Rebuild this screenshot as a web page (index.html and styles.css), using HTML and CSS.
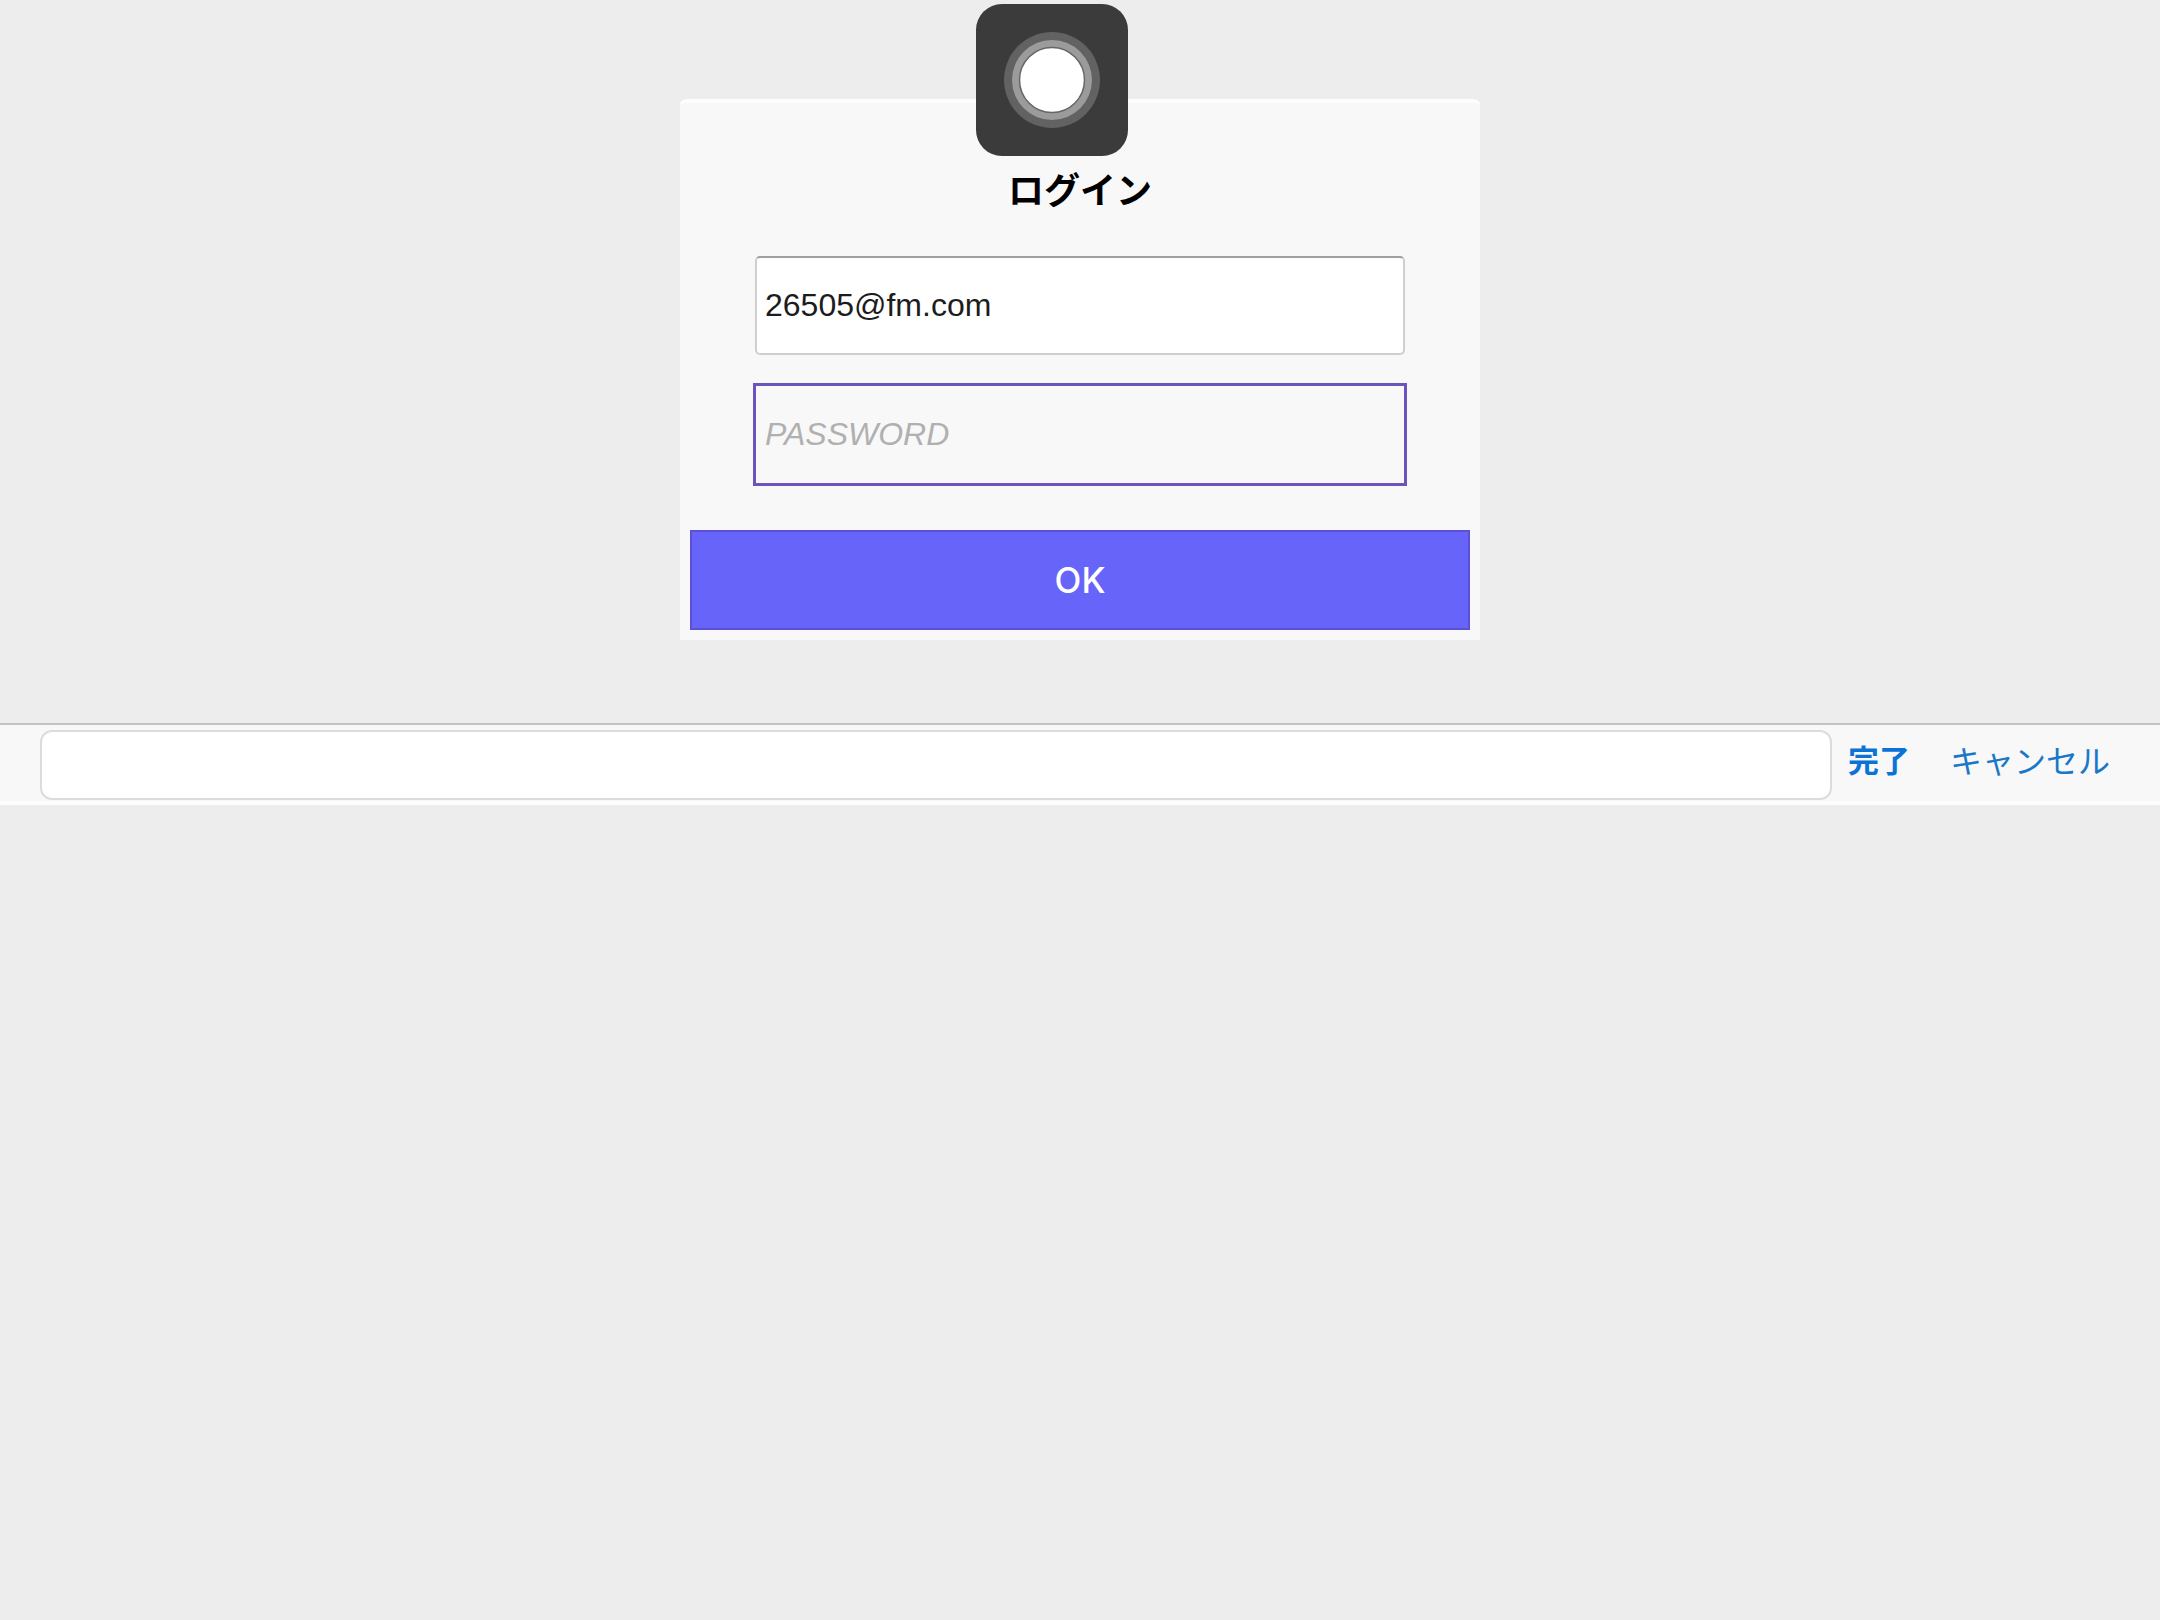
FILE: index.html
```html
<!DOCTYPE html>
<html lang="ja">
<head>
<meta charset="utf-8">
<title>ログイン</title>
<link rel="stylesheet" href="styles.css">
</head>
<body>
<main class="page">
  <form class="login">
    <h1 class="login-title">ログイン</h1>
    <div class="login-fields">
      <input class="field" type="email" value="26505@fm.com" aria-label="メールアドレス">
      <input class="field field-active" type="password" placeholder="PASSWORD" aria-label="パスワード">
    </div>
    <button class="login-submit" type="button">OK</button>
  </form>
</main>
<div class="toolbar">
  <input class="toolbar-input" type="text" aria-label="入力">
  <button class="toolbar-button toolbar-done" type="button">完了</button>
  <button class="toolbar-button" type="button">キャンセル</button>
</div>
<button class="assist" type="button" aria-label="AssistiveTouch">
  <svg class="assist-icon" viewBox="0 0 152 152" aria-hidden="true">
    <circle cx="76" cy="76" r="48" fill="#626262"/>
    <circle cx="76" cy="76" r="40" fill="#9b9b9b"/>
    <circle cx="76" cy="76" r="32.5" fill="#fff" stroke="#666" stroke-width="1.5"/>
  </svg>
</button>
</body>
</html>
```

FILE: styles.css
```css
* {
  box-sizing: border-box;
}

body {
  margin: 0;
  min-height: 100vh;
  background: #ededed;
  font-family: "Liberation Sans", "Noto Sans CJK JP", sans-serif;
}

button,
input {
  font-family: inherit;
}

.page {
  display: flex;
  justify-content: center;
  padding: 99px 20px 83px;
}

.login {
  display: flex;
  flex-direction: column;
  width: 100%;
  max-width: 800px;
  padding: 61px 10px 10px;
  border-top: 4px solid #fdfdfd;
  border-radius: 6px 6px 0 0;
  background: #f8f8f8;
}

.login-title {
  margin: 0;
  color: #000;
  font-family: "Noto Sans CJK JP", sans-serif;
  font-size: 36px;
  line-height: 48px;
  text-align: center;
}

.login-fields {
  display: grid;
  gap: 30px;
  padding: 44px 65px 46px;
}

.field {
  width: 100%;
  height: 99px;
  padding: 0 8px;
  border: 2px solid #cfcfcf;
  border-top-color: #a0a0a0;
  border-radius: 5px;
  outline: none;
  background: #fff;
  color: #1c1c1c;
  font-size: 32px;
}

.field-active {
  border-color: transparent;
  border-radius: 0;
  outline: 3px solid #6b54bb;
  outline-offset: -1px;
  background: #f8f8f8;
}

.field::placeholder {
  color: #b0b0b0;
  font-style: italic;
  opacity: 1;
}

.login-submit {
  height: 100px;
  padding: 0;
  border: 2px solid #5c50d4;
  background: #6764fa;
  color: #fff;
  font-family: Inter, sans-serif;
  font-size: 35px;
  font-weight: 500;
}

.toolbar {
  display: flex;
  align-items: center;
  height: 82px;
  padding: 0 50px 0 40px;
  border-top: 2px solid #c2c2c2;
  background: #f8f8f8;
  box-shadow: inset 0 -4px #fdfdfd;
}

.toolbar-input {
  flex: 1;
  min-width: 0;
  height: 70px;
  padding: 0 16px;
  border: 2px solid #dcdcdc;
  border-radius: 12px;
  background: #fff;
  font-size: 32px;
}

.toolbar-button {
  margin-left: 40px;
  padding: 0 0 12px;
  border: 0;
  background: none;
  color: #1a78c8;
  font-family: "Noto Sans CJK JP", sans-serif;
  font-size: 32px;
  line-height: 48px;
}

.toolbar-done {
  margin-left: 16px;
  color: #0a74d6;
  font-size: 31px;
  font-weight: 700;
}

.assist {
  position: absolute;
  top: 4px;
  left: calc(50% - 104px);
  width: 152px;
  height: 152px;
  padding: 0;
  border: 0;
  border-radius: 26px;
  background: #3b3b3b;
}

.assist-icon {
  display: block;
  width: 100%;
}
```
